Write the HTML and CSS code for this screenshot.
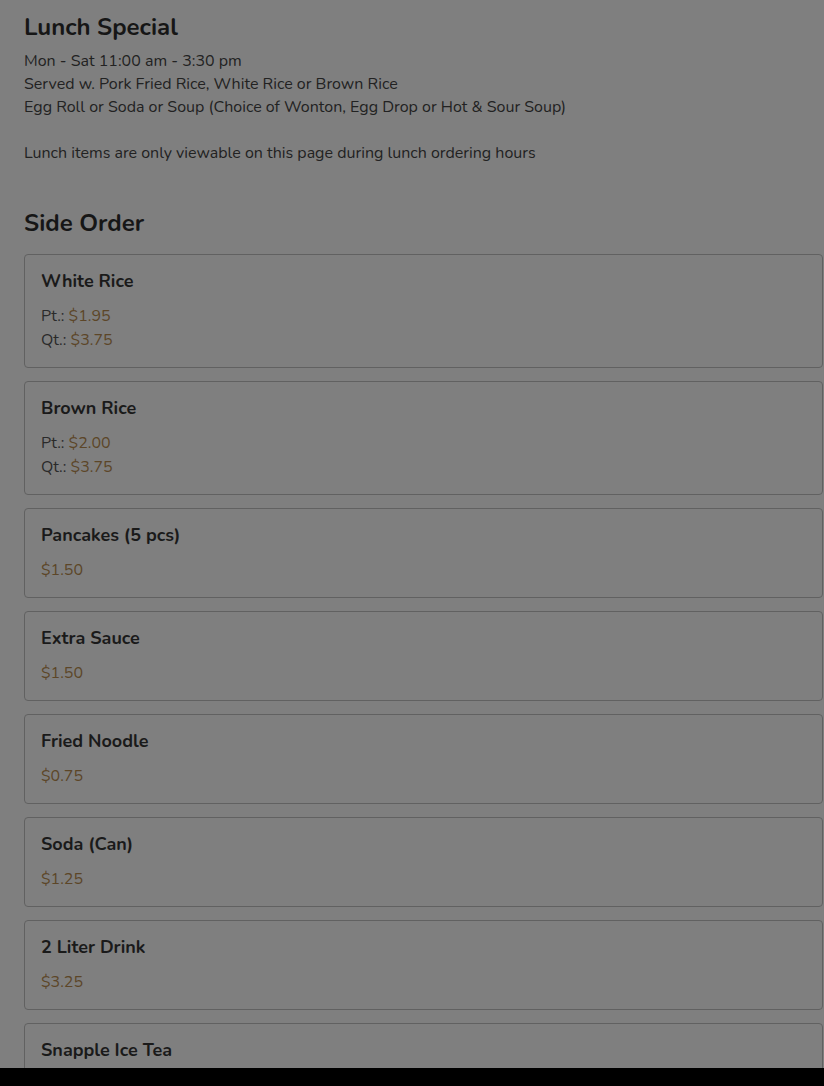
FILE: index.html
```html
<!DOCTYPE html>
<html lang="en">
<head>
<meta charset="utf-8">
<title>Menu</title>
<link rel="stylesheet" href="styles.css">
</head>
<body>
<main class="menu">
  <section class="category">
    <h2 class="cat-title">Lunch Special</h2>
    <div class="cat-desc">
      <p>Mon - Sat 11:00 am - 3:30 pm</p>
      <p>Served w. Pork Fried Rice, White Rice or Brown Rice</p>
      <p>Egg Roll or Soda or Soup (Choice of Wonton, Egg Drop or Hot &amp; Sour Soup)</p>
      <p class="note">Lunch items are only viewable on this page during lunch ordering hours</p>
    </div>
  </section>
  <section class="category side">
    <h2 class="cat-title">Side Order</h2>
    <div class="items">
      <div class="item">
        <div class="item-name">White Rice</div>
        <div class="prices">
          <div>Pt.: <span class="price">$1.95</span></div>
          <div>Qt.: <span class="price">$3.75</span></div>
        </div>
      </div>
      <div class="item">
        <div class="item-name">Brown Rice</div>
        <div class="prices">
          <div>Pt.: <span class="price">$2.00</span></div>
          <div>Qt.: <span class="price">$3.75</span></div>
        </div>
      </div>
      <div class="item">
        <div class="item-name">Pancakes (5 pcs)</div>
        <div class="prices"><div><span class="price">$1.50</span></div></div>
      </div>
      <div class="item">
        <div class="item-name">Extra Sauce</div>
        <div class="prices"><div><span class="price">$1.50</span></div></div>
      </div>
      <div class="item">
        <div class="item-name">Fried Noodle</div>
        <div class="prices"><div><span class="price">$0.75</span></div></div>
      </div>
      <div class="item">
        <div class="item-name">Soda (Can)</div>
        <div class="prices"><div><span class="price">$1.25</span></div></div>
      </div>
      <div class="item">
        <div class="item-name">2 Liter Drink</div>
        <div class="prices"><div><span class="price">$3.25</span></div></div>
      </div>
      <div class="item">
        <div class="item-name">Snapple Ice Tea</div>
        <div class="prices"><div><span class="price">$2.25</span></div></div>
      </div>
    </div>
  </section>
</main>
<div class="bottom-bar"></div>
</body>
</html>
```
FILE: styles.css
```css
html, body {
  margin: 0;
  padding: 0;
  background: #7f7f7f;
}
body {
  font-family: "Nunito", "Lato", "Noto Sans", sans-serif;
  color: #1b1b1b;
  overflow: hidden;
  height: 1086px;
}
.menu {
  padding: 12px 1px 0 24px;
}
.cat-title {
  margin: 0;
  font-size: 24px;
  line-height: 30px;
  font-weight: 700;
  color: #161616;
}
.cat-desc {
  margin-top: 8px;
  font-size: 16px;
  line-height: 23px;
  color: #222;
}
.cat-desc p {
  margin: 0;
}
.cat-desc .note {
  margin-top: 23px;
}
.side {
  margin-top: 43px;
}
.items {
  margin-top: 16px;
  display: flex;
  flex-direction: column;
  gap: 13px;
}
.item {
  border: 1px solid #616161;
  border-radius: 4px;
  padding: 13px 16px 15px;
}
.item-name {
  font-size: 18px;
  line-height: 27px;
  font-weight: 700;
  color: #1a1a1a;
}
.prices {
  margin-top: 9px;
  font-size: 16px;
  line-height: 24px;
  color: #2a2a2a;
}
.price {
  color: #5c4628;
}
.bottom-bar {
  position: fixed;
  left: 0;
  right: 0;
  bottom: 0;
  height: 18px;
  background: #000;
}
```
